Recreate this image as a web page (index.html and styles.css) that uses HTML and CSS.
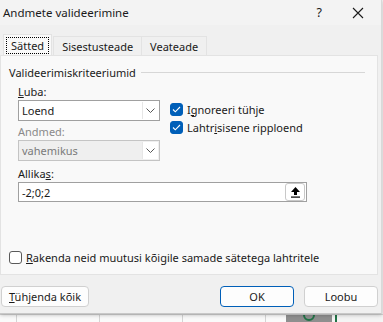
FILE: index.html
```html
<!DOCTYPE html>
<html lang="et">
<head>
    <meta charset="UTF-8">
    <title>Andmete valideerimine</title>
    <link rel="stylesheet" href="styles.css">
</head>
<body>
    <div class="sheet">
        <div class="dialog">
            <div class="titlebar">
                <span class="title">Andmete valideerimine</span>
                <span class="help">?</span>
                <svg class="close" width="12" height="12" viewBox="0 0 12 12">
                    <path d="M1 1 L11 11 M11 1 L1 11" stroke="#1a1a1a" stroke-width="1.1" fill="none"/>
                </svg>
            </div>

            <div class="tabs">
                <div class="tab active"><span class="focus">Sätted</span></div>
                <div class="tab">Sisestusteade</div>
                <div class="tab">Veateade</div>
            </div>

            <div class="panel">
                <div class="group-title">
                    <span>Valideerimiskriteeriumid</span>
                    <div class="rule"></div>
                </div>

                <div class="criteria">
                    <div class="left">
                        <label class="lbl"><u>L</u>uba:</label>
                        <div class="select">
                            <span>Loend</span>
                            <div class="arrow">
                                <svg width="9" height="5" viewBox="0 0 9 5"><path d="M0.5 0.5 L4.5 4.5 L8.5 0.5" stroke="#555" fill="none"/></svg>
                            </div>
                        </div>
                        <label class="lbl disabled">Andmed:</label>
                        <div class="select dim">
                            <span>vahemikus</span>
                            <div class="arrow">
                                <svg width="9" height="5" viewBox="0 0 9 5"><path d="M0.5 0.5 L4.5 4.5 L8.5 0.5" stroke="#555" fill="none"/></svg>
                            </div>
                        </div>
                    </div>
                    <div class="right">
                        <div class="check-row">
                            <span class="box checked">
                                <svg width="9" height="7" viewBox="0 0 9 7"><path d="M1 3.5 L3.3 5.8 L8 1" stroke="#fff" stroke-width="1.1" fill="none"/></svg>
                            </span>
                            <span>I<u>g</u>noreeri tühje</span>
                        </div>
                        <div class="check-row">
                            <span class="box checked">
                                <svg width="9" height="7" viewBox="0 0 9 7"><path d="M1 3.5 L3.3 5.8 L8 1" stroke="#fff" stroke-width="1.1" fill="none"/></svg>
                            </span>
                            <span>Lahtr<u>i</u>sisene ripploend</span>
                        </div>
                    </div>
                </div>

                <label class="lbl">Allika<u>s</u>:</label>
                <div class="source">
                    <span>-2;0;2</span>
                    <div class="pick">
                        <svg width="11" height="12" viewBox="0 0 11 12"><path d="M5.5 1 L10 6 L7 6 L7 9 L4 9 L4 6 L1 6 Z" fill="#000"/><rect x="1" y="10.5" width="9" height="1.2" fill="#000"/></svg>
                    </div>
                </div>

                <div class="apply">
                    <span class="box"></span>
                    <span><u>R</u>akenda neid muutusi kõigile samade sätetega lahtritele</span>
                </div>
            </div>

            <div class="footer">
                <button class="btn"><u>T</u>ühjenda kõik</button>
                <div class="spacer"></div>
                <button class="btn primary">OK</button>
                <button class="btn">Loobu</button>
            </div>
        </div>
        <div class="grid">
            <div class="cell"></div>
            <div class="cell wide"></div>
            <div class="cell wide"></div>
            <div class="cell wide"></div>
            <div class="cell narrow"></div>
            <div class="cell marked">
                <span class="ring"></span>
            </div>
            <div class="cell green"></div>
        </div>
    </div>
</body>
</html>
```

FILE: styles.css
```css
body {
    margin: 0;
    font-family: "Noto Sans", "Open Sans", sans-serif;
    font-size: 11px;
    color: #1a1a1a;
    background-color: #ffffff;
}

.sheet {
    width: 383px;
    height: 322px;
    overflow: hidden;
    background-color: #f4f4f4;
    position: relative;
}

.dialog {
    position: relative;
    z-index: 1;
    width: 381px;
    height: 313px;
    background-color: #f0f0f0;
    border-right: 1px solid #d9d9d9;
    border-bottom: 1px solid #c8c8c8;
    box-shadow: 0 1px 4px rgba(0, 0, 0, 0.25);
    display: flex;
    flex-direction: column;
}

/* excel cells peeking out under the dialog */
.grid {
    display: flex;
    height: 9px;
    border-top: 1px solid #d4d4d4;
}

.cell {
    width: 16px;
    border-right: 1px solid #d4d4d4;
    background-color: #fafafa;
}

.cell.wide {
    width: 82px;
}

.cell.narrow {
    width: 20px;
    border-right: none;
}

.cell.marked {
    width: 46px;
    background-color: #8f8f8f;
    display: flex;
    justify-content: center;
    overflow: hidden;
    border-right: none;
}

.ring {
    width: 8px;
    height: 8px;
    border: 2px solid #217346;
    border-radius: 50%;
    margin-top: -6px;
}

.cell.green {
    width: 2px;
    background-color: #217346;
    border: none;
    margin-left: 3px;
}

.titlebar {
    height: 25px;
    display: flex;
    align-items: center;
    padding-left: 3px;
    background-color: #f3f3f3;
}

.title {
    flex: 1;
    font-size: 11.5px;
}

.help {
    font-size: 12.5px;
    margin-right: 30px;
}

.close {
    margin-right: 17px;
}

.tabs {
    display: flex;
    align-items: flex-end;
    margin-top: 10px;
    padding-left: 3px;
    height: 20px;
}

.tab {
    height: 18px;
    padding: 0 8px;
    display: flex;
    align-items: center;
    border: 1px solid #e3e3e3;
    border-bottom: none;
    background-color: #f0f0f0;
    margin-left: -1px;
}

.tab.active {
    height: 20px;
    padding: 0 2px;
    background-color: #f9f9f9;
    margin-left: 0;
    margin-right: 2px;
}

.focus {
    border: 1px dotted #000;
    padding: 0 4px;
    line-height: 15px;
}

.panel {
    height: 218px;
    background-color: #f9f9f9;
    border: 1px solid #e3e3e3;
    margin-right: 3px;
    padding: 0 8px;
    display: flex;
    flex-direction: column;
}

.group-title {
    display: flex;
    align-items: center;
    margin-top: 8px;
    height: 17px;
}

.group-title .rule {
    flex: 1;
    height: 1px;
    background-color: #d7d7d7;
    margin-left: 5px;
    margin-right: 4px;
}

.criteria {
    display: flex;
    padding-left: 9px;
}

.left {
    display: flex;
    flex-direction: column;
    width: 142px;
}

.lbl {
    display: block;
    height: 17px;
    line-height: 17px;
    margin-top: 2px;
}

.panel > .lbl {
    margin-left: 9px;
    margin-top: 4px;
}

.disabled {
    color: #8a8a8a;
}

.select {
    height: 19px;
    border: 1px solid #a0a0a0;
    background-color: #fff;
    display: flex;
    align-items: center;
    padding-left: 3px;
}

.select span {
    flex: 1;
}

.select .arrow {
    width: 15px;
    height: 17px;
    margin-right: 1px;
    display: flex;
    align-items: center;
    justify-content: center;
    border-left: 1px solid #e6e6e6;
}

.select.dim {
    background-color: #efefef;
    border-color: #c4c4c4;
    color: #7a7a7a;
}

.select.dim .arrow {
    background-color: #fff;
}

.right {
    margin-left: 10px;
    padding-top: 19px;
}

.check-row {
    display: flex;
    align-items: center;
    height: 18px;
}

.box {
    width: 11px;
    height: 11px;
    border: 1px solid #5a5a5a;
    border-radius: 3px;
    margin-right: 4px;
    display: flex;
    align-items: center;
    justify-content: center;
    background-color: #fff;
}

.box.checked {
    background-color: #005fb8;
    border-color: #005fb8;
}

.source {
    margin-left: 9px;
    width: 284px;
    height: 18px;
    border: 1px solid #a0a0a0;
    background-color: #fff;
    display: flex;
    align-items: center;
    padding-left: 3px;
}

.source span {
    flex: 1;
}

.pick {
    width: 18px;
    height: 16px;
    border: 1px solid #c8c8c8;
    border-radius: 3px;
    display: flex;
    align-items: center;
    justify-content: center;
    margin-right: 1px;
}

.apply {
    display: flex;
    align-items: center;
    margin-top: auto;
    margin-bottom: 9px;
}

.footer {
    display: flex;
    padding: 11px 3px 0 1px;
}

.spacer {
    flex: 1;
}

.btn {
    font-family: inherit;
    font-size: 11px;
    color: #1a1a1a;
    height: 21px;
    padding: 0 7px;
    border: 1px solid #d0d0d0;
    border-radius: 4px;
    background-color: #fdfdfd;
    min-width: 74px;
    margin-left: 10px;
}

.btn:first-child {
    margin-left: 0;
    min-width: 88px;
}

.btn.primary {
    border-color: #005fb8;
}
```
